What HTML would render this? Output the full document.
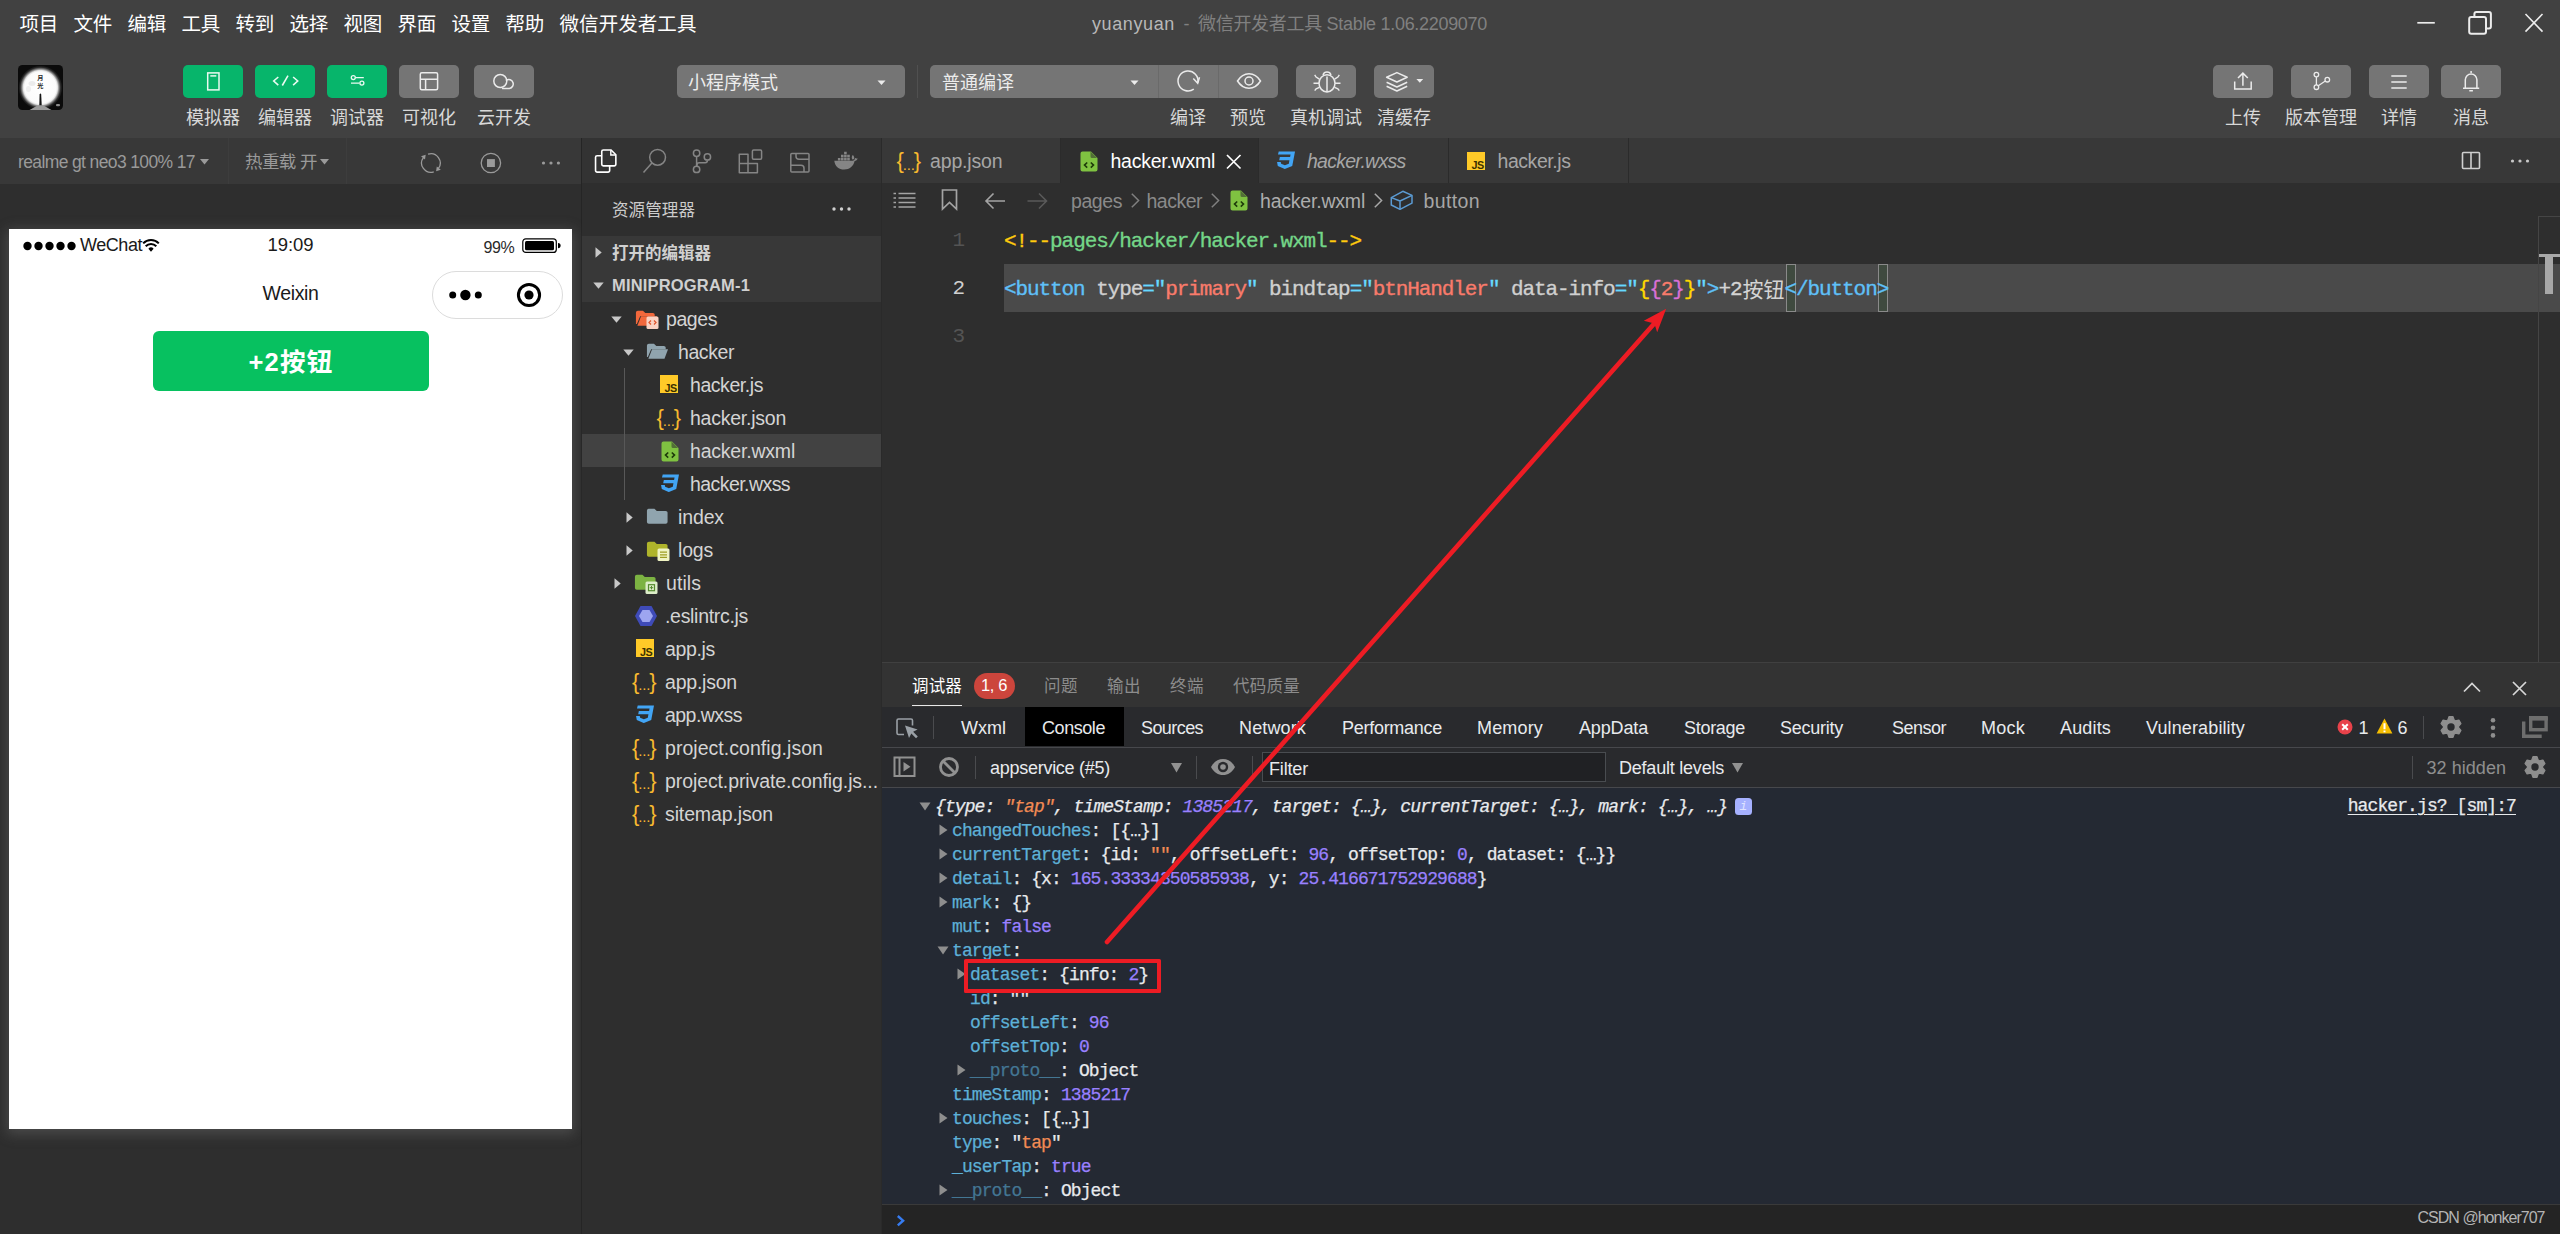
<!DOCTYPE html>
<html lang="zh-CN"><head><meta charset="utf-8"><title>微信开发者工具</title>
<style>
html,body{margin:0;padding:0;background:#2e2e2e;}
body{width:2560px;height:1234px;position:relative;overflow:hidden;font-family:'Liberation Sans','Noto Sans CJK SC',sans-serif;}
body>div,body>span,body>svg{position:absolute;}
span{white-space:pre;}

</style></head><body>
<div style="left:0px;top:0px;width:2560px;height:138px;background:#414141;"></div>
<span style="left:19.50px;top:10.50px;font-family:'Liberation Sans','Noto Sans CJK SC',sans-serif;font-size:19.5px;line-height:27px;color:#ffffff;letter-spacing:-0.258px;">项目</span>
<span style="left:73.50px;top:10.50px;font-family:'Liberation Sans','Noto Sans CJK SC',sans-serif;font-size:19.5px;line-height:27px;color:#ffffff;letter-spacing:-0.258px;">文件</span>
<span style="left:127.50px;top:10.50px;font-family:'Liberation Sans','Noto Sans CJK SC',sans-serif;font-size:19.5px;line-height:27px;color:#ffffff;letter-spacing:-0.258px;">编辑</span>
<span style="left:181.50px;top:10.50px;font-family:'Liberation Sans','Noto Sans CJK SC',sans-serif;font-size:19.5px;line-height:27px;color:#ffffff;letter-spacing:-0.258px;">工具</span>
<span style="left:235.50px;top:10.50px;font-family:'Liberation Sans','Noto Sans CJK SC',sans-serif;font-size:19.5px;line-height:27px;color:#ffffff;letter-spacing:-0.258px;">转到</span>
<span style="left:289.50px;top:10.50px;font-family:'Liberation Sans','Noto Sans CJK SC',sans-serif;font-size:19.5px;line-height:27px;color:#ffffff;letter-spacing:-0.258px;">选择</span>
<span style="left:343.50px;top:10.50px;font-family:'Liberation Sans','Noto Sans CJK SC',sans-serif;font-size:19.5px;line-height:27px;color:#ffffff;letter-spacing:-0.258px;">视图</span>
<span style="left:397.50px;top:10.50px;font-family:'Liberation Sans','Noto Sans CJK SC',sans-serif;font-size:19.5px;line-height:27px;color:#ffffff;letter-spacing:-0.258px;">界面</span>
<span style="left:451.50px;top:10.50px;font-family:'Liberation Sans','Noto Sans CJK SC',sans-serif;font-size:19.5px;line-height:27px;color:#ffffff;letter-spacing:-0.258px;">设置</span>
<span style="left:505.50px;top:10.50px;font-family:'Liberation Sans','Noto Sans CJK SC',sans-serif;font-size:19.5px;line-height:27px;color:#ffffff;letter-spacing:-0.258px;">帮助</span>
<span style="left:559.50px;top:10.50px;font-family:'Liberation Sans','Noto Sans CJK SC',sans-serif;font-size:19.5px;line-height:27px;color:#ffffff;letter-spacing:0.069px;">微信开发者工具</span>
<span style="left:1092.00px;top:12.00px;font-family:'Liberation Sans','Noto Sans CJK SC',sans-serif;font-size:18px;line-height:25px;color:#b8b8b8;letter-spacing:0.615px;">yuanyuan</span>
<span style="left:1183.50px;top:12.00px;font-family:'Liberation Sans','Noto Sans CJK SC',sans-serif;font-size:18px;line-height:25px;color:#808080;">-</span>
<span style="left:1198.00px;top:12.00px;font-family:'Liberation Sans','Noto Sans CJK SC',sans-serif;font-size:18px;line-height:25px;color:#808080;letter-spacing:-0.302px;">微信开发者工具 Stable 1.06.2209070</span>
<svg style="left:2400px;top:0px;" width="160" height="46" viewBox="2400 0 160 46"><path d="M2417.3 22.8h17.5" stroke="#ececec" stroke-width="1.7" fill="none"/><rect x="2469.2" y="17.1" width="16.8" height="16.6" rx="2" stroke="#ececec" stroke-width="2" fill="none"/><path d="M2474.4 16v-2a2 2 0 0 1 2-2h12.500a2 2 0 0 1 2 2v12.500a2 2 0 0 1-2 2h-2" stroke="#ececec" stroke-width="2" fill="none"/><path d="M2525.5 14l17 17.600M2542.500 14l-17 17.600" stroke="#ececec" stroke-width="1.600" fill="none"/></svg>
<svg style="left:18px;top:65px;" width="45" height="45" viewBox="0 0 45 45"><defs><radialGradient id="moon" cx="22.4" cy="22.6" r="22" gradientUnits="userSpaceOnUse"><stop offset="0" stop-color="#ffffff"/><stop offset="0.72" stop-color="#fbfbfb"/><stop offset="0.78" stop-color="#e2e2e2"/><stop offset="0.84" stop-color="#8a8a8a"/><stop offset="0.92" stop-color="#2c2c2c"/><stop offset="1" stop-color="#0b0b0b"/></radialGradient><clipPath id="avc"><rect x="0" y="0" width="45" height="45" rx="4.5"/></clipPath></defs><g clip-path="url(#avc)"><rect width="45" height="45" fill="#0b0b0b"/><circle cx="22.4" cy="22.6" r="22" fill="url(#moon)"/><ellipse cx="14" cy="18.500" rx="3.500" ry="2.500" fill="#ececec"/><ellipse cx="10.500" cy="24" rx="2.500" ry="3" fill="#efefef"/><path d="M11.500 45l8.500-4.800h5l8.500 4.800z" fill="#9a9a9a"/><path d="M21.600 29.500c0.500-1.200 1.300-1.200 1.600 0l0.500 10.800h-2.400z" fill="#161616"/><rect x="38" y="39" width="4" height="2.200" rx="1" fill="#8c8c8c"/></g></svg>
<span style="left:37.300px;top:73.500px;font-family:'Liberation Sans','Noto Sans CJK SC',sans-serif;font-size:6.200px;line-height:8px;color:#2a2a2a;font-weight:700;width:7px;white-space:normal;word-break:break-all;">月光</span>
<div style="left:183px;top:65px;width:60px;height:33px;background:#07b56b;border-radius:5px;"></div>
<div style="left:255px;top:65px;width:60px;height:33px;background:#07b56b;border-radius:5px;"></div>
<div style="left:327px;top:65px;width:60px;height:33px;background:#07b56b;border-radius:5px;"></div>
<div style="left:399px;top:65px;width:60px;height:33px;background:#757575;border-radius:5px;"></div>
<div style="left:474px;top:65px;width:60px;height:33px;background:#757575;border-radius:5px;"></div>
<svg style="left:183px;top:65px;" width="360" height="33" viewBox="183 65 360 33"><rect x="207.700" y="72.900" width="11.300" height="17" fill="none" stroke="#eafaf1" stroke-width="1.500"/><path d="M210.300 75.900h6" stroke="#eafaf1" stroke-width="1.500"/><path d="M278.300 77l-4.600 4 4.600 4.100M293.100 77l4.600 4-4.600 4.100M288 75.700l-5.700 9.800" fill="none" stroke="#eafaf1" stroke-width="1.600"/><circle cx="353.300" cy="77.600" r="2" fill="none" stroke="#eafaf1" stroke-width="1.300"/><path d="M355.500 77.600h8.300M351 83.100h8.300" stroke="#eafaf1" stroke-width="1.400"/><circle cx="361.900" cy="83.100" r="2" fill="none" stroke="#eafaf1" stroke-width="1.300"/><rect x="420.300" y="72.700" width="17.300" height="17" rx="1.500" fill="none" stroke="#ebebeb" stroke-width="1.500"/><path d="M420.300 79.300h17.300M425.600 79.300v10.400" stroke="#ebebeb" stroke-width="1.500"/><circle cx="500.300" cy="81" r="6.500" fill="none" stroke="#ebebeb" stroke-width="1.500"/><path d="M506.400 80.100a4.500 4.500 0 1 1 3 8.300h-6.900" fill="none" stroke="#ebebeb" stroke-width="1.500" stroke-linecap="round"/></svg>
<span style="left:186.00px;top:105.50px;font-family:'Liberation Sans','Noto Sans CJK SC',sans-serif;font-size:18px;line-height:25px;color:#d8d8d8;">模拟器</span>
<span style="left:258.00px;top:105.50px;font-family:'Liberation Sans','Noto Sans CJK SC',sans-serif;font-size:18px;line-height:25px;color:#d8d8d8;">编辑器</span>
<span style="left:330.00px;top:105.50px;font-family:'Liberation Sans','Noto Sans CJK SC',sans-serif;font-size:18px;line-height:25px;color:#d8d8d8;">调试器</span>
<span style="left:402.00px;top:105.50px;font-family:'Liberation Sans','Noto Sans CJK SC',sans-serif;font-size:18px;line-height:25px;color:#d8d8d8;">可视化</span>
<span style="left:477.00px;top:105.50px;font-family:'Liberation Sans','Noto Sans CJK SC',sans-serif;font-size:18px;line-height:25px;color:#d8d8d8;">云开发</span>
<div style="left:677px;top:65px;width:228px;height:33px;background:#757575;border-radius:5px;"></div>
<span style="left:688.00px;top:70.50px;font-family:'Liberation Sans','Noto Sans CJK SC',sans-serif;font-size:18px;line-height:25px;color:#ececec;">小程序模式</span>
<svg style="left:876px;top:78.5px;" width="12" height="8" viewBox="0 0 12 8"><path d="M1.500 1.500h8l-4 4.500z" fill="#ececec"/></svg>
<div style="left:917px;top:65px;width:1px;height:33px;background:#505050;"></div>
<div style="left:930px;top:65px;width:348px;height:33px;background:#757575;border-radius:5px;"></div>
<div style="left:1158px;top:65px;width:1px;height:33px;background:#6a6a6a;"></div>
<div style="left:1218px;top:65px;width:1px;height:33px;background:#6a6a6a;"></div>
<span style="left:942.00px;top:70.50px;font-family:'Liberation Sans','Noto Sans CJK SC',sans-serif;font-size:18px;line-height:25px;color:#ececec;">普通编译</span>
<svg style="left:1129px;top:78.5px;" width="12" height="8" viewBox="0 0 12 8"><path d="M1.500 1.500h8l-4 4.500z" fill="#ececec"/></svg>
<div style="left:1296px;top:65px;width:60px;height:33px;background:#757575;border-radius:5px;"></div>
<div style="left:1374px;top:65px;width:60px;height:33px;background:#757575;border-radius:5px;"></div>
<svg style="left:1160px;top:65px;" width="280" height="33" viewBox="1160 65 280 33"><path d="M1193.800 89.200a10 10 0 1 1 4.100-6.500" fill="none" stroke="#ebebeb" stroke-width="1.500"/><path d="M1193.300 78.600l4.400 4.600 1.800-6" fill="none" stroke="#ebebeb" stroke-width="1.500"/><path d="M1237.500 81c3-4.800 7-7.200 11.500-7.200s8.500 2.400 11.500 7.200c-3 4.800-7 7.200-11.500 7.200s-8.500-2.400-11.500-7.200z" fill="none" stroke="#ebebeb" stroke-width="1.500"/><circle cx="1249" cy="81" r="4" fill="none" stroke="#ebebeb" stroke-width="1.500"/><ellipse cx="1327" cy="83.300" rx="8" ry="8.600" fill="none" stroke="#ebebeb" stroke-width="1.500"/><path d="M1327 76.500v15.400" stroke="#ebebeb" stroke-width="1.500"/><path d="M1323 75a4.200 4.200 0 0 1 8 0" fill="none" stroke="#ebebeb" stroke-width="1.500"/><path d="M1319.400 79.200l-3.300-2.100-1.400-2.200M1319 83.300h-5.500M1319.400 87.300l-3.300 1.500-1.400 1.800M1334.600 79.200l3.300-2.100 1.400-2.200M1335 83.300h5.500M1334.600 87.300l3.300 1.500 1.400 1.800" fill="none" stroke="#ebebeb" stroke-width="1.400"/><path d="M1396.900 72.600l10.300 4.700-10.300 4.700-10.300-4.700z" fill="none" stroke="#ebebeb" stroke-width="1.500" stroke-linejoin="round"/><path d="M1386.600 82.300l10.300 4.700 10.300-4.700M1386.600 86.300l10.300 4.700 10.300-4.700" fill="none" stroke="#ebebeb" stroke-width="1.500" stroke-linejoin="round"/><path d="M1416.400 79h6.800l-3.400 3.700z" fill="#ebebeb"/></svg>
<span style="left:1170.00px;top:105.50px;font-family:'Liberation Sans','Noto Sans CJK SC',sans-serif;font-size:18px;line-height:25px;color:#d8d8d8;">编译</span>
<span style="left:1230.00px;top:105.50px;font-family:'Liberation Sans','Noto Sans CJK SC',sans-serif;font-size:18px;line-height:25px;color:#d8d8d8;">预览</span>
<span style="left:1290.00px;top:105.50px;font-family:'Liberation Sans','Noto Sans CJK SC',sans-serif;font-size:18px;line-height:25px;color:#d8d8d8;">真机调试</span>
<span style="left:1377.00px;top:105.50px;font-family:'Liberation Sans','Noto Sans CJK SC',sans-serif;font-size:18px;line-height:25px;color:#d8d8d8;">清缓存</span>
<div style="left:2213px;top:65px;width:60px;height:33px;background:#757575;border-radius:5px;"></div>
<div style="left:2291px;top:65px;width:60px;height:33px;background:#757575;border-radius:5px;"></div>
<div style="left:2369px;top:65px;width:60px;height:33px;background:#757575;border-radius:5px;"></div>
<div style="left:2441px;top:65px;width:60px;height:33px;background:#757575;border-radius:5px;"></div>
<svg style="left:2213px;top:65px;" width="290" height="33" viewBox="2213 65 290 33"><path d="M2234.700 81.600v7.500h16.500v-7.500" fill="none" stroke="#ebebeb" stroke-width="1.500"/><path d="M2242.900 85.800v-12.200M2238 78l4.900-4.900 4.900 4.900" fill="none" stroke="#ebebeb" stroke-width="1.500"/><circle cx="2316.400" cy="74.600" r="2.300" fill="none" stroke="#ebebeb" stroke-width="1.300"/><circle cx="2316.400" cy="87.200" r="2.300" fill="none" stroke="#ebebeb" stroke-width="1.300"/><circle cx="2327.300" cy="79.700" r="2.300" fill="none" stroke="#ebebeb" stroke-width="1.300"/><path d="M2316.400 77v7.900M2325.300 81l-7 4.800" fill="none" stroke="#ebebeb" stroke-width="1.300"/><path d="M2391.300 75.900h15.400M2391.300 82h15.400M2391.300 88h15.400" stroke="#ebebeb" stroke-width="1.500"/><path d="M2463 88.300h16.200M2465.300 88.300v-8.500a5.800 5.800 0 0 1 11.600 0v8.500M2471.100 71v2M2469.300 90.700h3.600" fill="none" stroke="#ebebeb" stroke-width="1.500"/></svg>
<span style="left:2225.00px;top:105.50px;font-family:'Liberation Sans','Noto Sans CJK SC',sans-serif;font-size:18px;line-height:25px;color:#d8d8d8;">上传</span>
<span style="left:2285.00px;top:105.50px;font-family:'Liberation Sans','Noto Sans CJK SC',sans-serif;font-size:18px;line-height:25px;color:#d8d8d8;">版本管理</span>
<span style="left:2381.00px;top:105.50px;font-family:'Liberation Sans','Noto Sans CJK SC',sans-serif;font-size:18px;line-height:25px;color:#d8d8d8;">详情</span>
<span style="left:2453.00px;top:105.50px;font-family:'Liberation Sans','Noto Sans CJK SC',sans-serif;font-size:18px;line-height:25px;color:#d8d8d8;">消息</span>
<div style="left:0px;top:138px;width:581px;height:46px;background:#383838;"></div>
<div style="left:228px;top:138px;width:1px;height:46px;background:#3d3d3d;"></div>
<div style="left:346px;top:138px;width:1px;height:46px;background:#3d3d3d;"></div>
<div style="left:0px;top:184px;width:581px;height:1050px;background:#2e2e2e;"></div>
<div style="left:581px;top:138px;width:1px;height:1096px;background:#252525;"></div>
<span style="left:18.00px;top:149.50px;font-family:'Liberation Sans','Noto Sans CJK SC',sans-serif;font-size:17.5px;line-height:24px;color:#9a9a9a;letter-spacing:-0.623px;">realme gt neo3 100% 17</span>
<svg style="left:199px;top:158px;" width="12" height="8" viewBox="0 0 12 8"><path d="M1 1h9l-4.500 5.500z" fill="#9a9a9a"/></svg>
<span style="left:245.00px;top:149.50px;font-family:'Liberation Sans','Noto Sans CJK SC',sans-serif;font-size:17.5px;line-height:24px;color:#9a9a9a;letter-spacing:-0.575px;">热重载 开</span>
<svg style="left:319px;top:158px;" width="12" height="8" viewBox="0 0 12 8"><path d="M1 1h9l-4.500 5.500z" fill="#9a9a9a"/></svg>
<svg style="left:415px;top:145px;" width="160" height="36" viewBox="415 145 160 36"><path d="M428.03 154.16A9.3 9.3 0 0 1 438.42 168.47M433.77 171.84A9.3 9.3 0 0 1 423.38 157.53" fill="none" stroke="#9a9a9a" stroke-width="1.300"/><path d="M436.10 171.28L436.80 166.39L440.79 169.73zM425.70 154.72L425.00 159.61L421.01 156.27z" fill="#9a9a9a"/><circle cx="490.900" cy="163" r="9.700" fill="none" stroke="#9a9a9a" stroke-width="1.300"/><rect x="487" y="159.100" width="7.900" height="7.900" fill="#9a9a9a"/><circle cx="543.500" cy="163" r="1.600" fill="#9a9a9a"/><circle cx="551" cy="163" r="1.600" fill="#9a9a9a"/><circle cx="558.400" cy="163" r="1.600" fill="#9a9a9a"/></svg>
<div style="left:9px;top:229px;width:563px;height:900px;background:#ffffff;box-shadow:0 3px 12px 2px rgba(110,110,110,0.45);"></div>
<svg style="left:23px;top:240.5px;" width="56" height="10" viewBox="0 0 56 10"><circle cx="4.5" cy="5" r="4.2" fill="#000000"/><circle cx="15.5" cy="5" r="4.2" fill="#000000"/><circle cx="26.5" cy="5" r="4.2" fill="#000000"/><circle cx="37.5" cy="5" r="4.2" fill="#000000"/><circle cx="48.5" cy="5" r="4.2" fill="#000000"/></svg>
<span style="left:80.00px;top:232.50px;font-family:'Liberation Sans','Noto Sans CJK SC',sans-serif;font-size:18px;line-height:25px;color:#1a1a1a;letter-spacing:-0.451px;">WeChat</span>
<svg style="left:142px;top:237px;" width="18" height="16" viewBox="0 0 18 16"><path d="M9 14.800l2.600-3.100a3.600 3.600 0 0 0-5.200 0z" fill="#000000"/><path d="M3.700 9.300a7.300 7.300 0 0 1 10.600 0M1.200 6.400a10.800 10.800 0 0 1 15.600 0" fill="none" stroke="#000000" stroke-width="2"/></svg>
<span style="left:267.50px;top:231.50px;font-family:'Liberation Sans','Noto Sans CJK SC',sans-serif;font-size:18.5px;line-height:26px;color:#1a1a1a;letter-spacing:-0.059px;">19:09</span>
<span style="left:483.50px;top:236.50px;font-family:'Liberation Sans','Noto Sans CJK SC',sans-serif;font-size:16px;line-height:22px;color:#2a2a2a;letter-spacing:-0.344px;">99%</span>
<svg style="left:522px;top:237.5px;" width="40" height="16" viewBox="0 0 40 16"><rect x="0.800" y="0.800" width="33.500" height="13.600" rx="3" fill="none" stroke="#000000" stroke-width="1.200"/><rect x="3" y="3" width="29" height="9.200" rx="1.500" fill="#000000"/><path d="M36 5v5.200a2.600 2.600 0 0 0 0-5.200z" fill="#000000"/></svg>
<span style="left:262.50px;top:279.50px;font-family:'Liberation Sans','Noto Sans CJK SC',sans-serif;font-size:19.5px;line-height:27px;color:#1a1a1a;letter-spacing:-0.362px;">Weixin</span>
<div style="left:432px;top:271px;width:130.5px;height:47.5px;background:#ffffff;border-radius:24px;border:1px solid #dcdcdc;box-sizing:border-box;"></div>
<svg style="left:445px;top:285px;" width="40" height="20" viewBox="0 0 40 20"><circle cx="7.700" cy="10" r="3.500" fill="#000000"/><circle cx="20.400" cy="10" r="5.200" fill="#000000"/><circle cx="33.300" cy="10" r="3.500" fill="#000000"/></svg>
<svg style="left:515px;top:281px;" width="28" height="28" viewBox="0 0 28 28"><circle cx="14" cy="14" r="10.600" fill="none" stroke="#000000" stroke-width="3"/><circle cx="14" cy="14" r="4.600" fill="#000000"/></svg>
<div style="left:153px;top:331px;width:276px;height:60px;background:#07c160;border-radius:6px;"></div>
<span style="left:248.50px;top:344.00px;font-family:'Liberation Sans','Noto Sans CJK SC',sans-serif;font-size:25.5px;line-height:36px;color:#ffffff;font-weight:700;letter-spacing:1.230px;">+2按钮</span>
<div style="left:582px;top:138px;width:299px;height:45px;background:#333333;"></div>
<div style="left:582px;top:183px;width:299px;height:1051px;background:#2e2e2e;"></div>
<div style="left:881px;top:138px;width:1px;height:1096px;background:#2a2a2a;"></div>
<svg style="left:582px;top:138px;" width="300" height="46" viewBox="0 0 300 46"><path d="M21.350 11.950h7.700l4.800 4.800v9.500a1.600 1.600 0 0 1-1.600 1.600h-10.900a1.600 1.600 0 0 1-1.600-1.600v-12.700a1.600 1.600 0 0 1 1.600-1.600z" fill="none" stroke="#ffffff" stroke-width="1.600"/><path d="M28.800 12.300v4.700h4.700" fill="none" stroke="#ffffff" stroke-width="1.400"/><path d="M19.750 17.750h-4.600a1.600 1.600 0 0 0-1.600 1.600v13.200a1.600 1.600 0 0 0 1.600 1.600h10.900a1.600 1.600 0 0 0 1.600-1.600v-4.700" fill="none" stroke="#ffffff" stroke-width="1.600"/><circle cx="75.600" cy="19.300" r="7.900" fill="none" stroke="#858585" stroke-width="1.500"/><path d="M69.900 25l-8.400 9.600" stroke="#858585" stroke-width="1.500"/><circle cx="114.600" cy="15.200" r="3.200" fill="none" stroke="#858585" stroke-width="1.500"/><circle cx="114.600" cy="31.400" r="3.200" fill="none" stroke="#858585" stroke-width="1.500"/><circle cx="125.400" cy="18.900" r="3.200" fill="none" stroke="#858585" stroke-width="1.500"/><path d="M114.600 18.500v9.600M125.400 22.200v0.400a2.200 2.200 0 0 1-2.200 2.200h-6a2.200 2.200 0 0 0-2.200 2.200v1" fill="none" stroke="#858585" stroke-width="1.500"/><path d="M157.300 16.200h8.700v9.400h9.400v9.200h-18.100zM157.300 25.600h8.700v9.200" fill="none" stroke="#858585" stroke-width="1.500" stroke-linejoin="round"/><rect x="170.400" y="12" width="9.200" height="9.200" rx="1.200" fill="none" stroke="#858585" stroke-width="1.500"/><rect x="208.800" y="15.600" width="18.200" height="18.500" rx="1" fill="none" stroke="#858585" stroke-width="1.500"/><path d="M214 15.600v2.700a3 3 0 0 0 3 3h10M208.800 27.200h10.200a3 3 0 0 1 3 3v3.900" fill="none" stroke="#858585" stroke-width="1.500"/><path d="M252.300 22.700h18.200c1.400 0 2.400-1 2.600-2.600 1 0.500 1.700 0.500 2.500 0.100-0.400 1.800-1.500 2.600-3 2.800-1.300 5.500-5 8.500-10.300 8.500-5.800 0-9.300-3-10-8.800z" fill="#858585"/><path d="M254.400 19.600h2.600v2.600h-2.600zM257.500 19.600h2.600v2.600h-2.600zM260.600 19.600h2.600v2.600h-2.600zM263.700 19.600h2.600v2.600h-2.600zM257.500 16.500h2.600v2.600h-2.600zM260.600 16.500h2.600v2.600h-2.600zM263.700 16.500h2.600v2.600h-2.600zM260.600 13.400h2.600v2.600h-2.600z" fill="#858585" transform="translate(1.500,0.300)"/><path d="M270.300 21.500c-0.900-1.500-0.700-3.300 0.500-4.500 1.100 1 1.600 2.400 1.400 3.900z" fill="#858585"/></svg>
<span style="left:612.00px;top:199.00px;font-family:'Liberation Sans','Noto Sans CJK SC',sans-serif;font-size:16.5px;line-height:23px;color:#cccccc;letter-spacing:0.100px;">资源管理器</span>
<svg style="left:830px;top:204px;" width="24" height="10" viewBox="0 0 24 10"><circle cx="4" cy="5" r="1.700" fill="#d0d0d0"/><circle cx="11.500" cy="5" r="1.700" fill="#d0d0d0"/><circle cx="19" cy="5" r="1.700" fill="#d0d0d0"/></svg>
<div style="left:582px;top:236px;width:299px;height:66px;background:#383838;"></div>
<svg style="left:595px;top:246.5px;" width="7" height="11" viewBox="0 0 7 11"><path d="M0.500 0.300v10.400l6.200-5.200z" fill="#c8c8c8"/></svg>
<span style="left:612.00px;top:242.00px;font-family:'Liberation Sans','Noto Sans CJK SC',sans-serif;font-size:16.5px;line-height:23px;color:#d0d0d0;font-weight:700;">打开的编辑器</span>
<svg style="left:592.5px;top:282.0px;" width="11" height="7" viewBox="0 0 11 7"><path d="M0.300 0.500h10.400l-5.200 6.200z" fill="#c8c8c8"/></svg>
<span style="left:612.00px;top:274.00px;font-family:'Liberation Sans','Noto Sans CJK SC',sans-serif;font-size:16.5px;line-height:23px;color:#d0d0d0;font-weight:700;letter-spacing:0.179px;">MINIPROGRAM-1</span>
<div style="left:582px;top:433.5px;width:299px;height:33px;background:#424242;"></div>
<div style="left:624px;top:368px;width:1px;height:132px;background:#585858;"></div>
<svg style="left:610.5px;top:315.5px;" width="11" height="7" viewBox="0 0 11 7"><path d="M0.300 0.500h10.400l-5.200 6.200z" fill="#c8c8c8"/></svg>
<svg style="left:635px;top:310px;" width="22.5" height="16.5" viewBox="0 0 24 20" preserveAspectRatio="none"><path d="M1 3a2 2 0 0 1 2-2h5.500l2.500 2.500h8a2 2 0 0 1 2 2v2h-15.500l-3.500 9.500h-1z" fill="#f2683c"/><path d="M6.500 7.500h17l-3.800 11.500h-17.200z" fill="#f2683c"/></svg>
<svg style="left:646px;top:316px;" width="14" height="14" viewBox="0 0 14 14"><rect x="0.500" y="0.500" width="12" height="12.500" rx="1.500" fill="#fbd3c4"/><path d="M5 4.500l-2 2 2 2M8 4.500l2 2-2 2" stroke="#e0532a" stroke-width="1.200" fill="none"/></svg>
<span style="left:666.00px;top:305.50px;font-family:'Liberation Sans','Noto Sans CJK SC',sans-serif;font-size:19.5px;line-height:27px;color:#d4d4d4;letter-spacing:-0.428px;">pages</span>
<svg style="left:622.5px;top:348.5px;" width="11" height="7" viewBox="0 0 11 7"><path d="M0.300 0.500h10.400l-5.200 6.200z" fill="#c8c8c8"/></svg>
<svg style="left:646px;top:343px;" width="22.5" height="16.5" viewBox="0 0 24 20" preserveAspectRatio="none"><path d="M1 3a2 2 0 0 1 2-2h5.500l2.500 2.500h8a2 2 0 0 1 2 2v2h-15.500l-3.500 9.500h-1z" fill="#90a4ae"/><path d="M6.500 7.500h17l-3.800 11.500h-17.200z" fill="#90a4ae"/></svg>
<span style="left:678.00px;top:338.50px;font-family:'Liberation Sans','Noto Sans CJK SC',sans-serif;font-size:19.5px;line-height:27px;color:#d4d4d4;letter-spacing:-0.422px;">hacker</span>
<div style="left:660px;top:375px;width:18.4px;height:18.4px;background:#ffca28;"></div><span style="left:664.6px;top:381.7px;font-family:'Liberation Sans','Noto Sans CJK SC',sans-serif;font-size:10.8px;line-height:12px;font-weight:700;color:#3b3000;letter-spacing:-0.5px;">JS</span>
<span style="left:690.00px;top:371.50px;font-family:'Liberation Sans','Noto Sans CJK SC',sans-serif;font-size:19.5px;line-height:27px;color:#d4d4d4;letter-spacing:-0.439px;">hacker.js</span>
<span style="left:656.5px;top:403.5px;font-family:'Liberation Sans','Noto Sans CJK SC',sans-serif;font-size:22px;line-height:27px;color:#f7b92f;letter-spacing:0;font-weight:400;">{</span><span style="left:662.8px;top:407px;font-family:'Liberation Sans','Noto Sans CJK SC',sans-serif;font-size:15px;line-height:27px;color:#f7b92f;letter-spacing:-0.2px;font-weight:400;">...</span><span style="left:673.8px;top:403.5px;font-family:'Liberation Sans','Noto Sans CJK SC',sans-serif;font-size:22px;line-height:27px;color:#f7b92f;letter-spacing:0;font-weight:400;">}</span>
<span style="left:690.00px;top:404.50px;font-family:'Liberation Sans','Noto Sans CJK SC',sans-serif;font-size:19.5px;line-height:27px;color:#d4d4d4;letter-spacing:-0.241px;">hacker.json</span>
<svg style="left:661px;top:440.5px;" width="18" height="21" viewBox="0 0 18 21"><path d="M2.500 0.500h8.500l6.500 6.500v11.500a2 2 0 0 1-2 2h-13a2 2 0 0 1-2-2v-16a2 2 0 0 1 2-2z" fill="#7fc241"/><path d="M10.500 0.500v5a1.500 1.500 0 0 0 1.500 1.500h5z" fill="#2e2e2e" opacity="0.55"/><path d="M7.200 11.500l-2.700 2.600 2.700 2.600M10.800 11.500l2.700 2.600-2.700 2.600" fill="none" stroke="#1e3a0a" stroke-width="1.600"/></svg>
<span style="left:690.00px;top:437.50px;font-family:'Liberation Sans','Noto Sans CJK SC',sans-serif;font-size:19.5px;line-height:27px;color:#d4d4d4;letter-spacing:-0.207px;">hacker.wxml</span>
<svg style="left:658.5px;top:473.5px;" width="20.500" height="18.500" viewBox="0 0 22 21" preserveAspectRatio="none"><path d="M4 0.500h17.500l-3 16.500-8 3.500-7.500-3.500-0.800-4.500h4l0.400 2 4 1.800 4.200-1.800 0.700-4h-11l0.700-3.600h11l0.500-2.800h-13.500z" fill="#42a5f5"/></svg>
<span style="left:690.00px;top:470.50px;font-family:'Liberation Sans','Noto Sans CJK SC',sans-serif;font-size:19.5px;line-height:27px;color:#d4d4d4;letter-spacing:-0.564px;">hacker.wxss</span>
<svg style="left:626px;top:511.5px;" width="7" height="11" viewBox="0 0 7 11"><path d="M0.500 0.300v10.400l6.200-5.200z" fill="#c8c8c8"/></svg>
<svg style="left:646px;top:508px;" width="22.5" height="16.5" viewBox="0 0 24 20" preserveAspectRatio="none"><path d="M1 3a2 2 0 0 1 2-2h6l2.500 2.500h9.500a2 2 0 0 1 2 2v11.500a2 2 0 0 1-2 2h-18a2 2 0 0 1-2-2z" fill="#90a4ae"/></svg>
<span style="left:678.00px;top:503.50px;font-family:'Liberation Sans','Noto Sans CJK SC',sans-serif;font-size:19.5px;line-height:27px;color:#d4d4d4;letter-spacing:-0.125px;">index</span>
<svg style="left:626px;top:544.5px;" width="7" height="11" viewBox="0 0 7 11"><path d="M0.500 0.300v10.400l6.200-5.200z" fill="#c8c8c8"/></svg>
<svg style="left:646px;top:541px;" width="22.5" height="16.5" viewBox="0 0 24 20" preserveAspectRatio="none"><path d="M1 3a2 2 0 0 1 2-2h6l2.500 2.500h9.500a2 2 0 0 1 2 2v11.500a2 2 0 0 1-2 2h-18a2 2 0 0 1-2-2z" fill="#afb42b"/></svg>
<svg style="left:657px;top:548px;" width="14" height="14" viewBox="0 0 14 14"><rect x="0.500" y="0.500" width="12" height="12.500" rx="1.500" fill="#f0f4c3"/><path d="M3 4.200h7M3 6.800h7M3 9.400h7" stroke="#9e9d24" stroke-width="1.200"/></svg>
<span style="left:678.00px;top:536.50px;font-family:'Liberation Sans','Noto Sans CJK SC',sans-serif;font-size:19.5px;line-height:27px;color:#d4d4d4;letter-spacing:-0.195px;">logs</span>
<svg style="left:614px;top:577.5px;" width="7" height="11" viewBox="0 0 7 11"><path d="M0.500 0.300v10.400l6.200-5.200z" fill="#c8c8c8"/></svg>
<svg style="left:634px;top:574px;" width="22.5" height="16.5" viewBox="0 0 24 20" preserveAspectRatio="none"><path d="M1 3a2 2 0 0 1 2-2h6l2.500 2.500h9.500a2 2 0 0 1 2 2v11.500a2 2 0 0 1-2 2h-18a2 2 0 0 1-2-2z" fill="#7cb342"/></svg>
<svg style="left:645px;top:581px;" width="14" height="14" viewBox="0 0 14 14"><rect x="0.500" y="0.500" width="12" height="12.500" rx="1.500" fill="#dcedc8"/><rect x="3.500" y="3.700" width="6" height="6" fill="none" stroke="#558b2f" stroke-width="1.200"/><path d="M6.500 5v3.400M4.800 6.700h3.400" stroke="#558b2f" stroke-width="1"/></svg>
<span style="left:666.00px;top:569.50px;font-family:'Liberation Sans','Noto Sans CJK SC',sans-serif;font-size:19.5px;line-height:27px;color:#d4d4d4;letter-spacing:0.062px;">utils</span>
<svg style="left:634px;top:605px;" width="24" height="22" viewBox="0 0 24 22"><path d="M6.500 1h11l5.500 10-5.500 10h-11l-5.500-10z" fill="#3f4bb8"/><path d="M8.500 5h7l3.500 6-3.500 6h-7l-3.500-6z" fill="#9da5f0"/></svg>
<span style="left:665.00px;top:602.50px;font-family:'Liberation Sans','Noto Sans CJK SC',sans-serif;font-size:19.5px;line-height:27px;color:#d4d4d4;letter-spacing:-0.307px;">.eslintrc.js</span>
<div style="left:635.5px;top:639px;width:18.4px;height:18.4px;background:#ffca28;"></div><span style="left:640.1px;top:645.7px;font-family:'Liberation Sans','Noto Sans CJK SC',sans-serif;font-size:10.8px;line-height:12px;font-weight:700;color:#3b3000;letter-spacing:-0.5px;">JS</span>
<span style="left:665.00px;top:635.50px;font-family:'Liberation Sans','Noto Sans CJK SC',sans-serif;font-size:19.5px;line-height:27px;color:#d4d4d4;letter-spacing:-0.341px;">app.js</span>
<span style="left:632px;top:667.5px;font-family:'Liberation Sans','Noto Sans CJK SC',sans-serif;font-size:22px;line-height:27px;color:#f7b92f;letter-spacing:0;font-weight:400;">{</span><span style="left:638.3px;top:671px;font-family:'Liberation Sans','Noto Sans CJK SC',sans-serif;font-size:15px;line-height:27px;color:#f7b92f;letter-spacing:-0.2px;font-weight:400;">...</span><span style="left:649.3px;top:667.5px;font-family:'Liberation Sans','Noto Sans CJK SC',sans-serif;font-size:22px;line-height:27px;color:#f7b92f;letter-spacing:0;font-weight:400;">}</span>
<span style="left:665.00px;top:668.50px;font-family:'Liberation Sans','Noto Sans CJK SC',sans-serif;font-size:19.5px;line-height:27px;color:#d4d4d4;letter-spacing:-0.217px;">app.json</span>
<svg style="left:633.5px;top:704.5px;" width="20.500" height="18.500" viewBox="0 0 22 21" preserveAspectRatio="none"><path d="M4 0.500h17.500l-3 16.500-8 3.500-7.500-3.500-0.800-4.500h4l0.400 2 4 1.800 4.200-1.800 0.700-4h-11l0.700-3.600h11l0.500-2.800h-13.500z" fill="#42a5f5"/></svg>
<span style="left:665.00px;top:701.50px;font-family:'Liberation Sans','Noto Sans CJK SC',sans-serif;font-size:19.5px;line-height:27px;color:#d4d4d4;letter-spacing:-0.537px;">app.wxss</span>
<span style="left:632px;top:733.5px;font-family:'Liberation Sans','Noto Sans CJK SC',sans-serif;font-size:22px;line-height:27px;color:#f7b92f;letter-spacing:0;font-weight:400;">{</span><span style="left:638.3px;top:737px;font-family:'Liberation Sans','Noto Sans CJK SC',sans-serif;font-size:15px;line-height:27px;color:#f7b92f;letter-spacing:-0.2px;font-weight:400;">...</span><span style="left:649.3px;top:733.5px;font-family:'Liberation Sans','Noto Sans CJK SC',sans-serif;font-size:22px;line-height:27px;color:#f7b92f;letter-spacing:0;font-weight:400;">}</span>
<span style="left:665.00px;top:734.50px;font-family:'Liberation Sans','Noto Sans CJK SC',sans-serif;font-size:19.5px;line-height:27px;color:#d4d4d4;letter-spacing:0.044px;">project.config.json</span>
<span style="left:632px;top:766.5px;font-family:'Liberation Sans','Noto Sans CJK SC',sans-serif;font-size:22px;line-height:27px;color:#f7b92f;letter-spacing:0;font-weight:400;">{</span><span style="left:638.3px;top:770px;font-family:'Liberation Sans','Noto Sans CJK SC',sans-serif;font-size:15px;line-height:27px;color:#f7b92f;letter-spacing:-0.2px;font-weight:400;">...</span><span style="left:649.3px;top:766.5px;font-family:'Liberation Sans','Noto Sans CJK SC',sans-serif;font-size:22px;line-height:27px;color:#f7b92f;letter-spacing:0;font-weight:400;">}</span>
<span style="left:665.00px;top:767.50px;font-family:'Liberation Sans','Noto Sans CJK SC',sans-serif;font-size:19.5px;line-height:27px;color:#d4d4d4;letter-spacing:-0.096px;">project.private.config.js...</span>
<span style="left:632px;top:799.5px;font-family:'Liberation Sans','Noto Sans CJK SC',sans-serif;font-size:22px;line-height:27px;color:#f7b92f;letter-spacing:0;font-weight:400;">{</span><span style="left:638.3px;top:803px;font-family:'Liberation Sans','Noto Sans CJK SC',sans-serif;font-size:15px;line-height:27px;color:#f7b92f;letter-spacing:-0.2px;font-weight:400;">...</span><span style="left:649.3px;top:799.5px;font-family:'Liberation Sans','Noto Sans CJK SC',sans-serif;font-size:22px;line-height:27px;color:#f7b92f;letter-spacing:0;font-weight:400;">}</span>
<span style="left:665.00px;top:800.50px;font-family:'Liberation Sans','Noto Sans CJK SC',sans-serif;font-size:19.5px;line-height:27px;color:#d4d4d4;letter-spacing:-0.122px;">sitemap.json</span>
<div style="left:882px;top:138px;width:1678px;height:45px;background:#383838;"></div>
<div style="left:882px;top:183px;width:1678px;height:479px;background:#2e2e2e;"></div>
<div style="left:1061px;top:138px;width:198px;height:45px;background:#2e2e2e;"></div>
<div style="left:1060px;top:138px;width:1px;height:45px;background:#2b2b2b;"></div>
<div style="left:1258px;top:138px;width:1px;height:45px;background:#2b2b2b;"></div>
<div style="left:1448px;top:138px;width:1px;height:45px;background:#2b2b2b;"></div>
<div style="left:1628px;top:138px;width:1px;height:45px;background:#2b2b2b;"></div>
<span style="left:896.5px;top:147.0px;font-family:'Liberation Sans','Noto Sans CJK SC',sans-serif;font-size:22px;line-height:27px;color:#f7b92f;letter-spacing:0;font-weight:400;">{</span><span style="left:902.8px;top:150.5px;font-family:'Liberation Sans','Noto Sans CJK SC',sans-serif;font-size:15px;line-height:27px;color:#f7b92f;letter-spacing:-0.2px;font-weight:400;">...</span><span style="left:913.8px;top:147.0px;font-family:'Liberation Sans','Noto Sans CJK SC',sans-serif;font-size:22px;line-height:27px;color:#f7b92f;letter-spacing:0;font-weight:400;">}</span>
<span style="left:930.00px;top:148.00px;font-family:'Liberation Sans','Noto Sans CJK SC',sans-serif;font-size:19.5px;line-height:27px;color:#a6a6a6;letter-spacing:-0.154px;">app.json</span>
<svg style="left:1080px;top:151.0px;" width="18" height="21" viewBox="0 0 18 21"><path d="M2.500 0.500h8.500l6.500 6.500v11.500a2 2 0 0 1-2 2h-13a2 2 0 0 1-2-2v-16a2 2 0 0 1 2-2z" fill="#7fc241"/><path d="M10.500 0.500v5a1.500 1.500 0 0 0 1.500 1.500h5z" fill="#2e2e2e" opacity="0.55"/><path d="M7.200 11.500l-2.700 2.600 2.700 2.600M10.800 11.500l2.700 2.600-2.700 2.600" fill="none" stroke="#1e3a0a" stroke-width="1.600"/></svg>
<span style="left:1110.50px;top:148.00px;font-family:'Liberation Sans','Noto Sans CJK SC',sans-serif;font-size:19.5px;line-height:27px;color:#ffffff;letter-spacing:-0.253px;">hacker.wxml</span>
<svg style="left:1225px;top:153px;" width="18" height="18" viewBox="0 0 18 18"><path d="M2 2l13.500 13.500M15.500 2l-13.500 13.500" stroke="#ffffff" stroke-width="1.700" fill="none"/></svg>
<svg style="left:1275.0px;top:151.0px;" width="20.500" height="18.500" viewBox="0 0 22 21" preserveAspectRatio="none"><path d="M4 0.500h17.500l-3 16.500-8 3.500-7.500-3.500-0.800-4.500h4l0.400 2 4 1.800 4.200-1.800 0.700-4h-11l0.700-3.600h11l0.500-2.800h-13.500z" fill="#42a5f5"/></svg>
<span style="left:1307.00px;top:148.00px;font-family:'Liberation Sans','Noto Sans CJK SC',sans-serif;font-size:19.5px;line-height:27px;color:#a6a6a6;font-style:italic;letter-spacing:-0.733px;">hacker.wxss</span>
<div style="left:1467px;top:152px;width:18.4px;height:18.4px;background:#ffca28;"></div><span style="left:1471.6px;top:158.7px;font-family:'Liberation Sans','Noto Sans CJK SC',sans-serif;font-size:10.8px;line-height:12px;font-weight:700;color:#3b3000;letter-spacing:-0.5px;">JS</span>
<span style="left:1497.50px;top:148.00px;font-family:'Liberation Sans','Noto Sans CJK SC',sans-serif;font-size:19.5px;line-height:27px;color:#a6a6a6;letter-spacing:-0.439px;">hacker.js</span>
<svg style="left:2461px;top:151px;" width="22" height="20" viewBox="0 0 22 20"><rect x="1.500" y="1.500" width="17" height="16" rx="1" fill="none" stroke="#d0d0d0" stroke-width="1.600"/><path d="M10 1.500v16" stroke="#d0d0d0" stroke-width="1.600"/></svg>
<svg style="left:2509px;top:156px;" width="24" height="10" viewBox="0 0 24 10"><circle cx="3.500" cy="5" r="1.600" fill="#c8c8c8"/><circle cx="11" cy="5" r="1.600" fill="#c8c8c8"/><circle cx="18.500" cy="5" r="1.600" fill="#c8c8c8"/></svg>
<svg style="left:892px;top:190px;" width="26" height="20" viewBox="0 0 26 20"><path d="M6.500 3.500h17M6.500 8h17M6.500 12.500h17M6.500 17h17" stroke="#a4a4a4" stroke-width="1.500"/><path d="M1.500 3.500h2.500M1.500 8h2.500M1.500 12.500h2.500M1.500 17h2.500" stroke="#a4a4a4" stroke-width="1.500"/></svg>
<svg style="left:940px;top:188px;" width="20" height="24" viewBox="0 0 20 24"><path d="M2.500 2h14v19l-7-6.500-7 6.500z" fill="none" stroke="#a4a4a4" stroke-width="1.700" stroke-linejoin="miter"/></svg>
<svg style="left:983.5px;top:191.7px;" width="24" height="18" viewBox="0 0 24 18"><path d="M2 9h19M9.500 1.500l-7.500 7.500 7.500 7.500" fill="none" stroke="#a4a4a4" stroke-width="1.600"/></svg>
<svg style="left:1024.5px;top:191.7px;" width="24" height="18" viewBox="0 0 24 18"><path d="M2.500 9h19M14 1.500l7.500 7.500-7.500 7.500" fill="none" stroke="#5a5a5a" stroke-width="1.600"/></svg>
<span style="left:1071.00px;top:187.50px;font-family:'Liberation Sans','Noto Sans CJK SC',sans-serif;font-size:19.5px;line-height:27px;color:#8a8a8a;letter-spacing:-0.428px;">pages</span>
<span style="left:1146.50px;top:187.50px;font-family:'Liberation Sans','Noto Sans CJK SC',sans-serif;font-size:19.5px;line-height:27px;color:#8a8a8a;letter-spacing:-0.505px;">hacker</span>
<span style="left:1260.00px;top:187.50px;font-family:'Liberation Sans','Noto Sans CJK SC',sans-serif;font-size:19.5px;line-height:27px;color:#adadad;letter-spacing:-0.207px;">hacker.wxml</span>
<span style="left:1423.50px;top:187.50px;font-family:'Liberation Sans','Noto Sans CJK SC',sans-serif;font-size:19.5px;line-height:27px;color:#a6a6a6;letter-spacing:0.380px;">button</span>
<svg style="left:1131px;top:193px;" width="10" height="16" viewBox="0 0 10 16"><path d="M0.800 0.800l6.800 6.700-6.800 6.700" fill="none" stroke="#808080" stroke-width="1.500"/></svg>
<svg style="left:1211px;top:193px;" width="10" height="16" viewBox="0 0 10 16"><path d="M0.800 0.800l6.800 6.700-6.800 6.700" fill="none" stroke="#808080" stroke-width="1.500"/></svg>
<svg style="left:1374px;top:193px;" width="10" height="16" viewBox="0 0 10 16"><path d="M0.800 0.800l6.800 6.700-6.800 6.700" fill="none" stroke="#a8a8a8" stroke-width="1.500"/></svg>
<svg style="left:1230px;top:189.5px;" width="18" height="21" viewBox="0 0 18 21"><path d="M2.500 0.500h8.500l6.500 6.500v11.500a2 2 0 0 1-2 2h-13a2 2 0 0 1-2-2v-16a2 2 0 0 1 2-2z" fill="#7fc241"/><path d="M10.500 0.500v5a1.500 1.500 0 0 0 1.500 1.500h5z" fill="#2e2e2e" opacity="0.55"/><path d="M7.200 11.500l-2.700 2.600 2.700 2.600M10.800 11.500l2.700 2.600-2.700 2.600" fill="none" stroke="#1e3a0a" stroke-width="1.600"/></svg>
<svg style="left:1386px;top:186px;" width="30" height="28" viewBox="1386 186 30 28"><path d="M1402.800 191.300L1412 195.400V203.100L1400 209.300L1391.300 205V197.600z" fill="none" stroke="#5b9bd3" stroke-width="1.500" stroke-linejoin="round"/><path d="M1391.300 197.600L1400 201L1412 195.400M1400 201V209.300" fill="none" stroke="#5b9bd3" stroke-width="1.500" stroke-linejoin="round"/></svg>
<div style="left:1004px;top:264px;width:1556px;height:48px;background:#4a4a4a;"></div>
<span style="left:952.39px;top:227.00px;font-family:'Liberation Mono','Noto Sans CJK SC',monospace;font-size:21px;line-height:28px;color:#545454;">1</span>
<span style="left:952.39px;top:275.00px;font-family:'Liberation Mono','Noto Sans CJK SC',monospace;font-size:21px;line-height:28px;color:#d0d0d0;">2</span>
<span style="left:952.39px;top:323.00px;font-family:'Liberation Mono','Noto Sans CJK SC',monospace;font-size:21px;line-height:28px;color:#545454;">3</span>
<span style="left:1004.00px;top:227.50px;font-family:'Liberation Mono','Noto Sans CJK SC',monospace;font-size:21px;line-height:28px;color:#d4d4d4;letter-spacing:-1.082px;-webkit-text-stroke-width:0.35px;"><span style="color:#ffcb0d">&lt;!--</span><span style="color:#74d688">pages/hacker/hacker.wxml</span><span style="color:#ffcb0d">--&gt;</span></span>
<span style="left:1004.00px;top:275.50px;font-family:'Liberation Mono','Noto Sans CJK SC',monospace;font-size:21px;line-height:28px;color:#d4d4d4;letter-spacing:-1.082px;-webkit-text-stroke-width:0.35px;"><span style="color:#5fc0f8">&lt;button</span><span style="color:#d0d0d0"> type</span><span style="color:#66d9ff">="</span><span style="color:#f97b6b">primary</span><span style="color:#66d9ff">"</span><span style="color:#d0d0d0"> bindtap</span><span style="color:#66d9ff">="</span><span style="color:#f97b6b">btnHandler</span><span style="color:#66d9ff">"</span><span style="color:#d0d0d0"> data-info</span><span style="color:#66d9ff">="</span><span style="color:#ffd700">{</span><span style="color:#da70d6">{</span><span style="color:#f97b6b">2</span><span style="color:#da70d6">}</span><span style="color:#ffd700">}</span><span style="color:#66d9ff">"</span><span style="color:#5fc0f8">&gt;</span><span style="color:#d4d4d4">+2</span></span>
<span style="left:1742.50px;top:274.50px;font-family:'Liberation Sans','Noto Sans CJK SC',sans-serif;font-size:21px;line-height:29px;color:#d4d4d4;">按钮</span>
<div style="left:1786px;top:264px;width:10px;height:48px;background:#3f4a3f;border:1px solid #8a8a8a;box-sizing:border-box;"></div>
<div style="left:1878px;top:264px;width:10px;height:48px;background:#3f4a3f;border:1px solid #8a8a8a;box-sizing:border-box;"></div>
<span style="left:1784.50px;top:275.50px;font-family:'Liberation Mono','Noto Sans CJK SC',monospace;font-size:21px;line-height:28px;color:#d4d4d4;letter-spacing:-1.082px;-webkit-text-stroke-width:0.35px;"><span style="color:#5fc0f8">&lt;/button&gt;</span></span>
<div style="left:2538px;top:216px;width:1px;height:446px;background:#454545;"></div>
<div style="left:2538px;top:216px;width:22px;height:1px;background:#454545;"></div>
<div style="left:2539px;top:254px;width:21px;height:3px;background:#a8a8a8;"></div>
<div style="left:2545px;top:256px;width:8px;height:38px;background:#a8a8a8;"></div>
<div style="left:882px;top:662px;width:1678px;height:1px;background:#404040;"></div>
<div style="left:882px;top:663px;width:1678px;height:44px;background:#333333;"></div>
<span style="left:912.00px;top:674.50px;font-family:'Liberation Sans','Noto Sans CJK SC',sans-serif;font-size:16.5px;line-height:23px;color:#ffffff;letter-spacing:0.167px;">调试器</span>
<div style="left:912px;top:705px;width:50px;height:1.2px;background:#e8e8e8;"></div>
<div style="left:974px;top:672.5px;width:40.5px;height:26px;background:#cc453c;border-radius:13px;"></div>
<span style="left:981.00px;top:674.00px;font-family:'Liberation Sans','Noto Sans CJK SC',sans-serif;font-size:16.5px;line-height:23px;color:#ffffff;letter-spacing:-0.383px;">1, 6</span>
<span style="left:1044.00px;top:674.50px;font-family:'Liberation Sans','Noto Sans CJK SC',sans-serif;font-size:16.5px;line-height:23px;color:#8c8c8c;letter-spacing:0.500px;">问题</span>
<span style="left:1107.00px;top:674.50px;font-family:'Liberation Sans','Noto Sans CJK SC',sans-serif;font-size:16.5px;line-height:23px;color:#8c8c8c;letter-spacing:0.500px;">输出</span>
<span style="left:1170.00px;top:674.50px;font-family:'Liberation Sans','Noto Sans CJK SC',sans-serif;font-size:16.5px;line-height:23px;color:#8c8c8c;letter-spacing:0.500px;">终端</span>
<span style="left:1233.00px;top:674.50px;font-family:'Liberation Sans','Noto Sans CJK SC',sans-serif;font-size:16.5px;line-height:23px;color:#8c8c8c;letter-spacing:0.250px;">代码质量</span>
<svg style="left:2462px;top:680px;" width="20" height="14" viewBox="0 0 20 14"><path d="M2 11.500l8-8 8 8" fill="none" stroke="#d8d8d8" stroke-width="1.700"/></svg>
<svg style="left:2511px;top:680px;" width="18" height="18" viewBox="0 0 18 18"><path d="M2 2l13 13M15 2l-13 13" fill="none" stroke="#d8d8d8" stroke-width="1.700"/></svg>
<div style="left:882px;top:707px;width:1678px;height:40px;background:#292a2d;"></div>
<div style="left:882px;top:747px;width:1678px;height:1px;background:#47484c;"></div>
<div style="left:1025px;top:707px;width:99px;height:39px;background:#000000;"></div>
<svg style="left:895px;top:716px;" width="24" height="24" viewBox="0 0 24 24"><path d="M9 18.500h-5.500a1.500 1.500 0 0 1-1.500-1.500v-12.500a1.500 1.500 0 0 1 1.500-1.500h12.500a1.500 1.500 0 0 1 1.500 1.500v5" fill="none" stroke="#9aa0a6" stroke-width="1.600"/><path d="M10 9.500l4 12.500 2.300-4.500 4.700 4.700 1.800-1.800-4.700-4.700 4.500-2.200z" fill="#9aa0a6"/></svg>
<div style="left:933px;top:715.5px;width:1px;height:23px;background:#4a4b4e;"></div>
<span style="left:961.00px;top:716.00px;font-family:'Liberation Sans','Noto Sans CJK SC',sans-serif;font-size:18px;line-height:25px;color:#e8eaed;">Wxml</span>
<span style="left:1042.00px;top:716.00px;font-family:'Liberation Sans','Noto Sans CJK SC',sans-serif;font-size:18px;line-height:25px;color:#e8eaed;letter-spacing:-0.435px;">Console</span>
<span style="left:1141.00px;top:716.00px;font-family:'Liberation Sans','Noto Sans CJK SC',sans-serif;font-size:18px;line-height:25px;color:#e8eaed;letter-spacing:-0.578px;">Sources</span>
<span style="left:1239.00px;top:716.00px;font-family:'Liberation Sans','Noto Sans CJK SC',sans-serif;font-size:18px;line-height:25px;color:#e8eaed;letter-spacing:0.141px;">Network</span>
<span style="left:1342.00px;top:716.00px;font-family:'Liberation Sans','Noto Sans CJK SC',sans-serif;font-size:18px;line-height:25px;color:#e8eaed;letter-spacing:-0.277px;">Performance</span>
<span style="left:1477.00px;top:716.00px;font-family:'Liberation Sans','Noto Sans CJK SC',sans-serif;font-size:18px;line-height:25px;color:#e8eaed;letter-spacing:0.164px;">Memory</span>
<span style="left:1579.00px;top:716.00px;font-family:'Liberation Sans','Noto Sans CJK SC',sans-serif;font-size:18px;line-height:25px;color:#e8eaed;letter-spacing:-0.152px;">AppData</span>
<span style="left:1684.00px;top:716.00px;font-family:'Liberation Sans','Noto Sans CJK SC',sans-serif;font-size:18px;line-height:25px;color:#e8eaed;letter-spacing:-0.292px;">Storage</span>
<span style="left:1780.00px;top:716.00px;font-family:'Liberation Sans','Noto Sans CJK SC',sans-serif;font-size:18px;line-height:25px;color:#e8eaed;letter-spacing:-0.254px;">Security</span>
<span style="left:1892.00px;top:716.00px;font-family:'Liberation Sans','Noto Sans CJK SC',sans-serif;font-size:18px;line-height:25px;color:#e8eaed;letter-spacing:-0.508px;">Sensor</span>
<span style="left:1981.00px;top:716.00px;font-family:'Liberation Sans','Noto Sans CJK SC',sans-serif;font-size:18px;line-height:25px;color:#e8eaed;letter-spacing:0.246px;">Mock</span>
<span style="left:2060.00px;top:716.00px;font-family:'Liberation Sans','Noto Sans CJK SC',sans-serif;font-size:18px;line-height:25px;color:#e8eaed;letter-spacing:0.161px;">Audits</span>
<span style="left:2146.00px;top:716.00px;font-family:'Liberation Sans','Noto Sans CJK SC',sans-serif;font-size:18px;line-height:25px;color:#e8eaed;letter-spacing:0.124px;">Vulnerability</span>
<svg style="left:2336.6px;top:718.5px;" width="16" height="16" viewBox="0 0 16 16"><circle cx="8" cy="8" r="7.500" fill="#e8424a"/><path d="M5.200 5.200l5.600 5.600M10.800 5.200l-5.600 5.600" stroke="#ffffff" stroke-width="2"/></svg>
<span style="left:2358.50px;top:716.00px;font-family:'Liberation Sans','Noto Sans CJK SC',sans-serif;font-size:18px;line-height:25px;color:#e8eaed;">1</span>
<svg style="left:2376px;top:718.3px;" width="17" height="16" viewBox="0 0 17 16"><path d="M8.500 0.400l7.900 15.200h-15.800z" fill="#f5bd00"/><path d="M8.500 5.200v6M8.500 12.600v1.600" stroke="#ffffff" stroke-width="2"/></svg>
<span style="left:2397.50px;top:716.00px;font-family:'Liberation Sans','Noto Sans CJK SC',sans-serif;font-size:18px;line-height:25px;color:#e8eaed;">6</span>
<div style="left:2423px;top:715.5px;width:1px;height:23px;background:#4a4b4e;"></div>
<svg style="left:2439px;top:715.2px;" width="24" height="24" viewBox="0 0 24 24"><path d="M8.76 5.12L9.97 1.70L14.03 1.70L15.24 5.12L16.34 5.76L19.91 5.09L21.94 8.61L19.57 11.36L19.57 12.64L21.94 15.39L19.91 18.91L16.34 18.24L15.24 18.88L14.03 22.30L9.97 22.30L8.76 18.88L7.66 18.24L4.09 18.91L2.06 15.39L4.43 12.64L4.43 11.36L2.06 8.61L4.09 5.09L7.66 5.76z" fill="#8e8e8e" stroke="#8e8e8e" stroke-width="1.2" stroke-linejoin="round"/><circle cx="12" cy="12" r="3.700" fill="#292a2d"/></svg>
<svg style="left:2489.4px;top:716px;" width="8" height="24" viewBox="0 0 8 24"><circle cx="4" cy="4.200" r="2.300" fill="#8e8e8e"/><circle cx="4" cy="11.800" r="2.300" fill="#8e8e8e"/><circle cx="4" cy="19.400" r="2.300" fill="#8e8e8e"/></svg>
<svg style="left:2518px;top:712px;" width="34" height="30" viewBox="2518 712 34 30"><rect x="2530.700" y="718.500" width="15.400" height="11.200" fill="none" stroke="#6e6e6e" stroke-width="3.400"/><rect x="2529" y="716" width="18.800" height="4.500" fill="#6e6e6e"/><path d="M2523.700 721.600v14.700h18" fill="none" stroke="#6e6e6e" stroke-width="3.400"/></svg>
<div style="left:882px;top:748px;width:1678px;height:39px;background:#292a2d;"></div>
<div style="left:882px;top:787px;width:1678px;height:1px;background:#47484c;"></div>
<svg style="left:893px;top:756px;" width="24" height="22" viewBox="0 0 24 22"><rect x="1.500" y="1.500" width="20" height="18.500" fill="none" stroke="#919191" stroke-width="2"/><path d="M6.500 1.500v18.500" stroke="#919191" stroke-width="2"/><path d="M10.500 6l7 4.800-7 4.800z" fill="#919191"/></svg>
<svg style="left:938px;top:756px;" width="22" height="22" viewBox="0 0 22 22"><circle cx="11" cy="11" r="8.500" fill="none" stroke="#919191" stroke-width="2.800"/><path d="M5 5l12 12" stroke="#919191" stroke-width="2.800"/></svg>
<div style="left:975px;top:755.5px;width:1px;height:23.5px;background:#4a4b4e;"></div>
<span style="left:990.00px;top:755.50px;font-family:'Liberation Sans','Noto Sans CJK SC',sans-serif;font-size:18px;line-height:25px;color:#e8eaed;letter-spacing:-0.271px;">appservice (#5)</span>
<svg style="left:1170px;top:762px;" width="14" height="12" viewBox="0 0 14 12"><path d="M1 1h11l-5.500 9.500z" fill="#919191"/></svg>
<div style="left:1196px;top:755.5px;width:1px;height:23.5px;background:#4a4b4e;"></div>
<svg style="left:1210px;top:757px;" width="26" height="20" viewBox="0 0 26 20"><path d="M1 10c3-5.500 7-8 12-8s9 2.500 12 8c-3 5.500-7 8-12 8s-9-2.500-12-8z" fill="#919191"/><circle cx="13" cy="10" r="5.200" fill="#292a2d"/><circle cx="13" cy="10" r="2.800" fill="#919191"/></svg>
<div style="left:1252px;top:755.5px;width:1px;height:23.5px;background:#4a4b4e;"></div>
<div style="left:1262px;top:752px;width:344px;height:30px;background:#202124;border:1.500px solid #494c50;box-sizing:border-box;"></div>
<span style="left:1269.00px;top:756.50px;font-family:'Liberation Sans','Noto Sans CJK SC',sans-serif;font-size:18px;line-height:25px;color:#e8eaed;letter-spacing:-0.167px;">Filter</span>
<span style="left:1619.00px;top:755.50px;font-family:'Liberation Sans','Noto Sans CJK SC',sans-serif;font-size:18px;line-height:25px;color:#e8eaed;letter-spacing:-0.219px;">Default levels</span>
<svg style="left:1731px;top:762px;" width="14" height="12" viewBox="0 0 14 12"><path d="M1 1h11l-5.500 9.500z" fill="#919191"/></svg>
<div style="left:2412px;top:755.5px;width:1px;height:23.5px;background:#4a4b4e;"></div>
<span style="left:2426.50px;top:756.00px;font-family:'Liberation Sans','Noto Sans CJK SC',sans-serif;font-size:18px;line-height:25px;color:#8f8f8f;letter-spacing:0.047px;">32 hidden</span>
<svg style="left:2523px;top:755px;" width="24" height="24" viewBox="0 0 24 24"><path d="M8.76 5.12L9.97 1.70L14.03 1.70L15.24 5.12L16.34 5.76L19.91 5.09L21.94 8.61L19.57 11.36L19.57 12.64L21.94 15.39L19.91 18.91L16.34 18.24L15.24 18.88L14.03 22.30L9.97 22.30L8.76 18.88L7.66 18.24L4.09 18.91L2.06 15.39L4.43 12.64L4.43 11.36L2.06 8.61L4.09 5.09L7.66 5.76z" fill="#8e8e8e" stroke="#8e8e8e" stroke-width="1.2" stroke-linejoin="round"/><circle cx="12" cy="12" r="3.700" fill="#292a2d"/></svg>
<div style="left:882px;top:788px;width:1678px;height:416px;background:#242933;"></div>
<div style="left:882px;top:1204px;width:1678px;height:1px;background:#3a3a3a;"></div>
<div style="left:882px;top:1205px;width:1678px;height:29px;background:#242424;"></div>
<svg style="left:896px;top:1214px;" width="12" height="14" viewBox="0 0 12 14"><path d="M1.800 2l5.300 4.700-5.300 4.700" fill="none" stroke="#367cf1" stroke-width="2.400"/></svg>
<span style="left:2417.50px;top:1207.00px;font-family:'Liberation Sans','Noto Sans CJK SC',sans-serif;font-size:16px;line-height:22px;color:#b4b4b4;letter-spacing:-0.976px;">CSDN @honker707</span>
<svg style="left:919px;top:802px;" width="12" height="9" viewBox="0 0 12 9"><path d="M0.500 0.500h11l-5.500 8z" fill="#8e8e8e"/></svg>
<span style="left:935.00px;top:795.00px;font-family:'Liberation Mono','Noto Sans CJK SC',monospace;font-size:18px;line-height:24px;color:#e8eaed;font-style:italic;letter-spacing:-0.902px;-webkit-text-stroke-width:0.25px;"><span style="color:#e8eaed">{type: </span><span style="color:#f28b54">"tap"</span><span style="color:#e8eaed">, timeStamp: </span><span style="color:#9980ff">1385217</span><span style="color:#e8eaed">, target: </span><span style="color:#e8eaed">{…}</span><span style="color:#e8eaed">, currentTarget: </span><span style="color:#e8eaed">{…}</span><span style="color:#e8eaed">, mark: </span><span style="color:#e8eaed">{…}</span><span style="color:#e8eaed">, …}</span></span>
<div style="left:1735px;top:798px;width:17px;height:17px;background:#a6b1ff;border-radius:3.500px;"></div>
<span style="left:1739.59px;top:797.50px;font-family:'Liberation Mono','Noto Sans CJK SC',monospace;font-size:13px;line-height:18px;color:#dfe3ff;font-style:italic;">i</span>
<span style="left:2347.70px;top:794.00px;font-family:'Liberation Mono','Noto Sans CJK SC',monospace;font-size:18px;line-height:24px;color:#e8eaed;letter-spacing:-0.902px;-webkit-text-stroke-width:0.25px;text-decoration:underline;text-underline-offset:3px;">hacker.js? [sm]:7</span>
<svg style="left:939px;top:824px;" width="9" height="12" viewBox="0 0 9 12"><path d="M0.500 0.500v11l8-5.500z" fill="#8e8e8e"/></svg>
<span style="left:952.00px;top:819.00px;font-family:'Liberation Mono','Noto Sans CJK SC',monospace;font-size:18px;line-height:24px;color:#e8eaed;letter-spacing:-0.902px;-webkit-text-stroke-width:0.25px;"><span style="color:#5db0d7">changedTouches</span><span style="color:#e8eaed">: [{…}]</span></span>
<svg style="left:939px;top:848px;" width="9" height="12" viewBox="0 0 9 12"><path d="M0.500 0.500v11l8-5.500z" fill="#8e8e8e"/></svg>
<span style="left:952.00px;top:843.00px;font-family:'Liberation Mono','Noto Sans CJK SC',monospace;font-size:18px;line-height:24px;color:#e8eaed;letter-spacing:-0.902px;-webkit-text-stroke-width:0.25px;"><span style="color:#5db0d7">currentTarget</span><span style="color:#e8eaed">: {id: </span><span style="color:#f28b54">""</span><span style="color:#e8eaed">, offsetLeft: </span><span style="color:#9980ff">96</span><span style="color:#e8eaed">, offsetTop: </span><span style="color:#9980ff">0</span><span style="color:#e8eaed">, dataset: {…}}</span></span>
<svg style="left:939px;top:872px;" width="9" height="12" viewBox="0 0 9 12"><path d="M0.500 0.500v11l8-5.500z" fill="#8e8e8e"/></svg>
<span style="left:952.00px;top:867.00px;font-family:'Liberation Mono','Noto Sans CJK SC',monospace;font-size:18px;line-height:24px;color:#e8eaed;letter-spacing:-0.902px;-webkit-text-stroke-width:0.25px;"><span style="color:#5db0d7">detail</span><span style="color:#e8eaed">: {x: </span><span style="color:#9980ff">165.33334350585938</span><span style="color:#e8eaed">, y: </span><span style="color:#9980ff">25.416671752929688</span><span style="color:#e8eaed">}</span></span>
<svg style="left:939px;top:896px;" width="9" height="12" viewBox="0 0 9 12"><path d="M0.500 0.500v11l8-5.500z" fill="#8e8e8e"/></svg>
<span style="left:952.00px;top:891.00px;font-family:'Liberation Mono','Noto Sans CJK SC',monospace;font-size:18px;line-height:24px;color:#e8eaed;letter-spacing:-0.902px;-webkit-text-stroke-width:0.25px;"><span style="color:#5db0d7">mark</span><span style="color:#e8eaed">: {}</span></span>
<span style="left:952.00px;top:915.00px;font-family:'Liberation Mono','Noto Sans CJK SC',monospace;font-size:18px;line-height:24px;color:#e8eaed;letter-spacing:-0.902px;-webkit-text-stroke-width:0.25px;"><span style="color:#5db0d7">mut</span><span style="color:#e8eaed">: </span><span style="color:#9980ff">false</span></span>
<svg style="left:937px;top:946px;" width="12" height="9" viewBox="0 0 12 9"><path d="M0.500 0.500h11l-5.500 8z" fill="#8e8e8e"/></svg>
<span style="left:952.00px;top:939.00px;font-family:'Liberation Mono','Noto Sans CJK SC',monospace;font-size:18px;line-height:24px;color:#e8eaed;letter-spacing:-0.902px;-webkit-text-stroke-width:0.25px;"><span style="color:#5db0d7">target</span><span style="color:#e8eaed">:</span></span>
<svg style="left:957px;top:968px;" width="9" height="12" viewBox="0 0 9 12"><path d="M0.500 0.500v11l8-5.500z" fill="#8e8e8e"/></svg>
<span style="left:970.00px;top:963.00px;font-family:'Liberation Mono','Noto Sans CJK SC',monospace;font-size:18px;line-height:24px;color:#e8eaed;letter-spacing:-0.902px;-webkit-text-stroke-width:0.25px;"><span style="color:#5db0d7">dataset</span><span style="color:#e8eaed">: {info: </span><span style="color:#9980ff">2</span><span style="color:#e8eaed">}</span></span>
<span style="left:970.00px;top:987.00px;font-family:'Liberation Mono','Noto Sans CJK SC',monospace;font-size:18px;line-height:24px;color:#e8eaed;letter-spacing:-0.902px;-webkit-text-stroke-width:0.25px;"><span style="color:#5db0d7">id</span><span style="color:#e8eaed">: ""</span></span>
<span style="left:970.00px;top:1011.00px;font-family:'Liberation Mono','Noto Sans CJK SC',monospace;font-size:18px;line-height:24px;color:#e8eaed;letter-spacing:-0.902px;-webkit-text-stroke-width:0.25px;"><span style="color:#5db0d7">offsetLeft</span><span style="color:#e8eaed">: </span><span style="color:#9980ff">96</span></span>
<span style="left:970.00px;top:1035.00px;font-family:'Liberation Mono','Noto Sans CJK SC',monospace;font-size:18px;line-height:24px;color:#e8eaed;letter-spacing:-0.902px;-webkit-text-stroke-width:0.25px;"><span style="color:#5db0d7">offsetTop</span><span style="color:#e8eaed">: </span><span style="color:#9980ff">0</span></span>
<svg style="left:957px;top:1064px;" width="9" height="12" viewBox="0 0 9 12"><path d="M0.500 0.500v11l8-5.500z" fill="#8e8e8e"/></svg>
<span style="left:970.00px;top:1059.00px;font-family:'Liberation Mono','Noto Sans CJK SC',monospace;font-size:18px;line-height:24px;color:#e8eaed;letter-spacing:-0.902px;-webkit-text-stroke-width:0.25px;"><span style="color:#437693">__proto__</span><span style="color:#e8eaed">: Object</span></span>
<span style="left:952.00px;top:1083.00px;font-family:'Liberation Mono','Noto Sans CJK SC',monospace;font-size:18px;line-height:24px;color:#e8eaed;letter-spacing:-0.902px;-webkit-text-stroke-width:0.25px;"><span style="color:#5db0d7">timeStamp</span><span style="color:#e8eaed">: </span><span style="color:#9980ff">1385217</span></span>
<svg style="left:939px;top:1112px;" width="9" height="12" viewBox="0 0 9 12"><path d="M0.500 0.500v11l8-5.500z" fill="#8e8e8e"/></svg>
<span style="left:952.00px;top:1107.00px;font-family:'Liberation Mono','Noto Sans CJK SC',monospace;font-size:18px;line-height:24px;color:#e8eaed;letter-spacing:-0.902px;-webkit-text-stroke-width:0.25px;"><span style="color:#5db0d7">touches</span><span style="color:#e8eaed">: [{…}]</span></span>
<span style="left:952.00px;top:1131.00px;font-family:'Liberation Mono','Noto Sans CJK SC',monospace;font-size:18px;line-height:24px;color:#e8eaed;letter-spacing:-0.902px;-webkit-text-stroke-width:0.25px;"><span style="color:#5db0d7">type</span><span style="color:#e8eaed">: "</span><span style="color:#f28b54">tap</span><span style="color:#e8eaed">"</span></span>
<span style="left:952.00px;top:1155.00px;font-family:'Liberation Mono','Noto Sans CJK SC',monospace;font-size:18px;line-height:24px;color:#e8eaed;letter-spacing:-0.902px;-webkit-text-stroke-width:0.25px;"><span style="color:#5db0d7">_userTap</span><span style="color:#e8eaed">: </span><span style="color:#9980ff">true</span></span>
<svg style="left:939px;top:1184px;" width="9" height="12" viewBox="0 0 9 12"><path d="M0.500 0.500v11l8-5.500z" fill="#8e8e8e"/></svg>
<span style="left:952.00px;top:1179.00px;font-family:'Liberation Mono','Noto Sans CJK SC',monospace;font-size:18px;line-height:24px;color:#e8eaed;letter-spacing:-0.902px;-webkit-text-stroke-width:0.25px;"><span style="color:#437693">__proto__</span><span style="color:#e8eaed">: Object</span></span>
<div style="left:964px;top:959px;width:196.5px;height:34px;background:transparent;border:4px solid #ed1c24;box-sizing:border-box;border-radius:1.500px;"></div>
<svg style="left:0;top:0;pointer-events:none" width="2560" height="1234" viewBox="0 0 2560 1234"><path d="M1107 942L1654.500 323.200" stroke="#ed1c24" stroke-width="4.600" stroke-linecap="round" fill="none"/><path d="M1666.200 308.800L1657.200 332.300L1654.300 323.600L1643.800 320.700z" fill="#ed1c24"/></svg>
</body></html>
